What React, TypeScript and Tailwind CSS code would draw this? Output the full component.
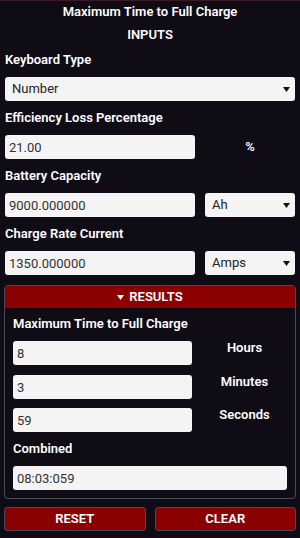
import React from 'react';

const font = { fontFamily: 'Roboto, "Liberation Sans", sans-serif' };

function Caret({ className = '' }: { className?: string }) {
  return (
    <svg className={className} width="7" height="5" viewBox="0 0 7 5">
      <path d="M0 0h7L3.5 5z" fill="currentColor" />
    </svg>
  );
}

function Field({ value, className = '' }: { value: string; className?: string }) {
  return (
    <input
      readOnly
      value={value}
      className={`h-[24px] rounded-[3px] bg-[#f4f4f4] px-[4px] text-[13px] text-[#333] outline-none ${className}`}
    />
  );
}

function Select({ value, className = '' }: { value: string; className?: string }) {
  return (
    <div className={`relative flex h-[24px] items-center rounded-[3px] bg-[#f4f4f4] pl-[7px] text-[13px] text-[#222] ${className}`}>
      {value}
      <Caret className="absolute right-[5px] top-[10px] text-[#111]" />
    </div>
  );
}

function Label({ children, className = '' }: { children: React.ReactNode; className?: string }) {
  return <p className={`text-[13px] font-semibold leading-[20px] text-white ${className}`}>{children}</p>;
}

function ResultRow({ value, unit, className = '' }: { value: string; unit: string; className?: string }) {
  return (
    <div className={`flex items-start ${className}`}>
      <Field value={value} className="w-[179px]" />
      <span className="flex-1 pl-[10px] text-center text-[13px] font-semibold leading-[14px] text-white">{unit}</span>
    </div>
  );
}

export default function App() {
  return (
    <div style={font} className="min-h-[538px] border-t border-[#3a1a22] bg-[#0f0c16] px-[5px] pb-[7px]">
      <h1 className="pt-[1px] text-center text-[13px] font-semibold leading-[20px] text-white">Maximum Time to Full Charge</h1>
      <p className="mt-[3px] text-center text-[13px] font-semibold leading-[20px] text-white">INPUTS</p>

      <Label className="mt-[5px]">Keyboard Type</Label>
      <Select value="Number" className="mt-[7px] w-full" />

      <Label className="mt-[7px]">Efficiency Loss Percentage</Label>
      <div className="mt-[7px] flex items-center gap-[10px]">
        <Field value="21.00" className="w-[190px]" />
        <span className="flex-1 text-center text-[13px] font-semibold text-white">%</span>
      </div>

      <Label className="mt-[7px]">Battery Capacity</Label>
      <div className="mt-[7px] flex gap-[10px]">
        <Field value="9000.000000" className="w-[190px]" />
        <Select value="Ah" className="flex-1" />
      </div>

      <Label className="mt-[7px]">Charge Rate Current</Label>
      <div className="mt-[7px] flex gap-[10px]">
        <Field value="1350.000000" className="w-[190px]" />
        <Select value="Amps" className="flex-1" />
      </div>

      <div className="-mx-px mt-[10px] overflow-hidden rounded-[4px] border border-[#4a4a55]">
        <div className="flex h-[22px] items-center justify-center gap-[5px] bg-[#8b0000] text-[13px] font-semibold text-white">
          <Caret />
          RESULTS
        </div>
        <div className="px-[8px] pb-[8px] pt-[6px]">
          <Label>Maximum Time to Full Charge</Label>
          <ResultRow value="8" unit="Hours" className="mt-[7px]" />
          <ResultRow value="3" unit="Minutes" className="mt-[10px]" />
          <ResultRow value="59" unit="Seconds" className="mt-[9px]" />
          <Label className="mt-[7px]">Combined</Label>
          <Field value="08:03:059" className="mt-[7px] w-full" />
        </div>
      </div>

      <div className="-mx-px mt-[8px] flex gap-[9px]">
        <button className="h-[24px] flex-1 rounded-[3px] border border-[#4a4a55] bg-[#8b0000] text-[13px] font-semibold text-white">RESET</button>
        <button className="h-[24px] flex-1 rounded-[3px] border border-[#4a4a55] bg-[#8b0000] text-[13px] font-semibold text-white">CLEAR</button>
      </div>
    </div>
  );
}
